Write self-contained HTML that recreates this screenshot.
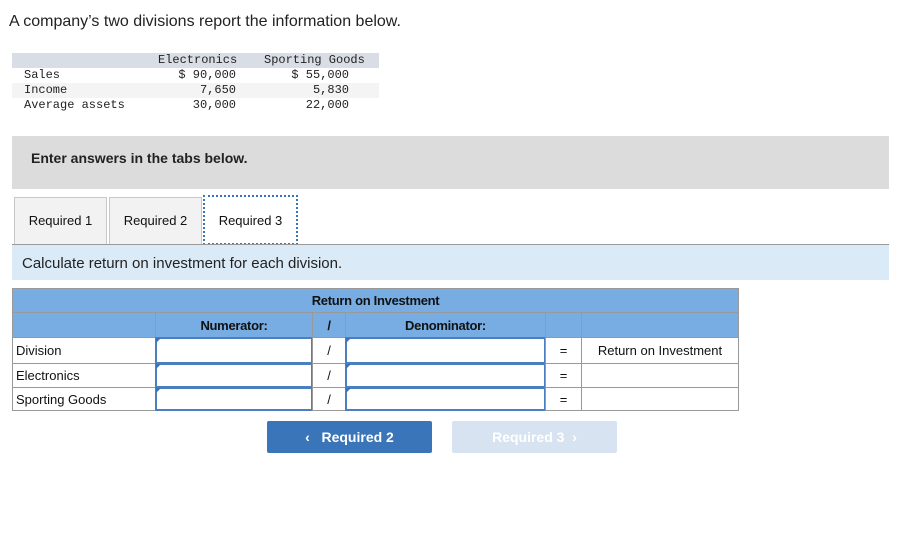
<!DOCTYPE html>
<html><head><style>
body{margin:0;width:919px;height:546px;background:#fff;font-family:"Liberation Sans",sans-serif;position:relative;overflow:hidden}
.a{position:absolute}
.m{font-family:"Liberation Mono",monospace;font-size:12px;color:#222}
.r{text-align:right}
.c{position:absolute;box-sizing:border-box;border:1px solid #999;font-size:13px;color:#111;display:flex;align-items:center}
.h{background:#77ade3;justify-content:center;font-weight:bold;letter-spacing:-0.3px}
.in{position:absolute;box-sizing:border-box;border:2px solid #4a7fc1;background:#fff}
.in:before{content:"";position:absolute;left:-1px;top:-1px;border-left:5px solid #3a74b9;border-bottom:5px solid transparent}
</style></head><body>
<div class="a" style="left:9px;top:13px;font-size:16px;color:#222">A company’s two divisions report the information below.</div>
<div class="a" style="left:12px;top:53px;width:367px;height:15px;background:#d9dde6"></div>
<div class="a" style="left:12px;top:83px;width:367px;height:15px;background:#f4f4f4"></div>
<div class="a m" style="left:158px;top:53px">Electronics</div>
<div class="a m" style="left:264px;top:53px">Sporting Goods</div>
<div class="a m" style="left:24px;top:68px">Sales</div>
<div class="a m" style="left:24px;top:83px">Income</div>
<div class="a m" style="left:24px;top:98px">Average assets</div>
<div class="a m r" style="left:140px;width:96px;top:68px">$ 90,000</div>
<div class="a m r" style="left:140px;width:96px;top:83px">7,650</div>
<div class="a m r" style="left:140px;width:96px;top:98px">30,000</div>
<div class="a m r" style="left:250px;width:99px;top:68px">$ 55,000</div>
<div class="a m r" style="left:250px;width:99px;top:83px">5,830</div>
<div class="a m r" style="left:250px;width:99px;top:98px">22,000</div>

<div class="a" style="left:12px;top:136px;width:877px;height:53px;background:#dcdcdc"></div>
<div class="a" style="left:31px;top:150px;font-size:14px;font-weight:bold;color:#222">Enter answers in the tabs below.</div>

<div class="a" style="left:14px;top:197px;width:93px;height:48px;box-sizing:border-box;border:1px solid #c8c8c8;background:#f2f2f2;font-size:13px;text-align:center;line-height:46px;color:#111">Required 1</div>
<div class="a" style="left:109px;top:197px;width:93px;height:48px;box-sizing:border-box;border:1px solid #c8c8c8;background:#f2f2f2;font-size:13px;text-align:center;line-height:46px;color:#111">Required 2</div>
<div class="a" style="left:203px;top:195px;width:95px;height:50px;box-sizing:border-box;border:2px dotted #3a74b9;background:#fff;font-size:13px;text-align:center;line-height:48px;color:#111">Required 3</div>
<div class="a" style="left:12px;top:244px;width:877px;height:1px;background:#999"></div>
<div class="a" style="left:12px;top:245px;width:877px;height:35px;background:#dbeaf7"></div>
<div class="a" style="left:22px;top:255px;font-size:15px;color:#222">Calculate return on investment for each division.</div>

<div class="c h" style="left:12px;top:288px;width:727px;height:25px">Return on Investment</div>
<div class="c h" style="left:12px;top:312px;width:144px;height:26px"></div>
<div class="c h" style="left:155px;top:312px;width:158px;height:26px">Numerator:</div>
<div class="c h" style="left:312px;top:312px;width:34px;height:26px">/</div>
<div class="c h" style="left:345px;top:312px;width:201px;height:26px">Denominator:</div>
<div class="c h" style="left:545px;top:312px;width:37px;height:26px"></div>
<div class="c h" style="left:581px;top:312px;width:158px;height:26px"></div>

<div class="c" style="left:12px;top:337px;width:144px;height:27px;padding-left:3px">Division</div>
<div class="c" style="left:12px;top:363px;width:144px;height:25px;padding-left:3px">Electronics</div>
<div class="c" style="left:12px;top:387px;width:144px;height:24px;padding-left:3px">Sporting Goods</div>
<div class="in" style="left:155px;top:337px;width:158px;height:27px"></div>
<div class="in" style="left:155px;top:363px;width:158px;height:25px"></div>
<div class="in" style="left:155px;top:387px;width:158px;height:24px"></div>
<div class="c" style="left:312px;top:337px;width:34px;height:27px;justify-content:center">/</div>
<div class="c" style="left:312px;top:363px;width:34px;height:25px;justify-content:center">/</div>
<div class="c" style="left:312px;top:387px;width:34px;height:24px;justify-content:center">/</div>
<div class="in" style="left:345px;top:337px;width:201px;height:27px"></div>
<div class="in" style="left:345px;top:363px;width:201px;height:25px"></div>
<div class="in" style="left:345px;top:387px;width:201px;height:24px"></div>
<div class="c" style="left:545px;top:337px;width:37px;height:27px;justify-content:center">=</div>
<div class="c" style="left:545px;top:363px;width:37px;height:25px;justify-content:center">=</div>
<div class="c" style="left:545px;top:387px;width:37px;height:24px;justify-content:center">=</div>
<div class="c" style="left:581px;top:337px;width:158px;height:27px;justify-content:center">Return on Investment</div>
<div class="c" style="left:581px;top:363px;width:158px;height:25px"></div>
<div class="c" style="left:581px;top:387px;width:158px;height:24px"></div>

<div class="a" style="left:267px;top:421px;width:165px;height:32px;background:#3a74b9;border-radius:2px;color:#fff;font-size:14px;font-weight:bold;text-align:center;line-height:32px">&#8249;&nbsp;&nbsp; Required 2</div>
<div class="a" style="left:452px;top:421px;width:165px;height:32px;background:#d7e3f1;border-radius:2px;color:#fff;font-size:14px;font-weight:bold;text-align:center;line-height:32px">Required 3 &nbsp;&#8250;</div>
</body></html>
